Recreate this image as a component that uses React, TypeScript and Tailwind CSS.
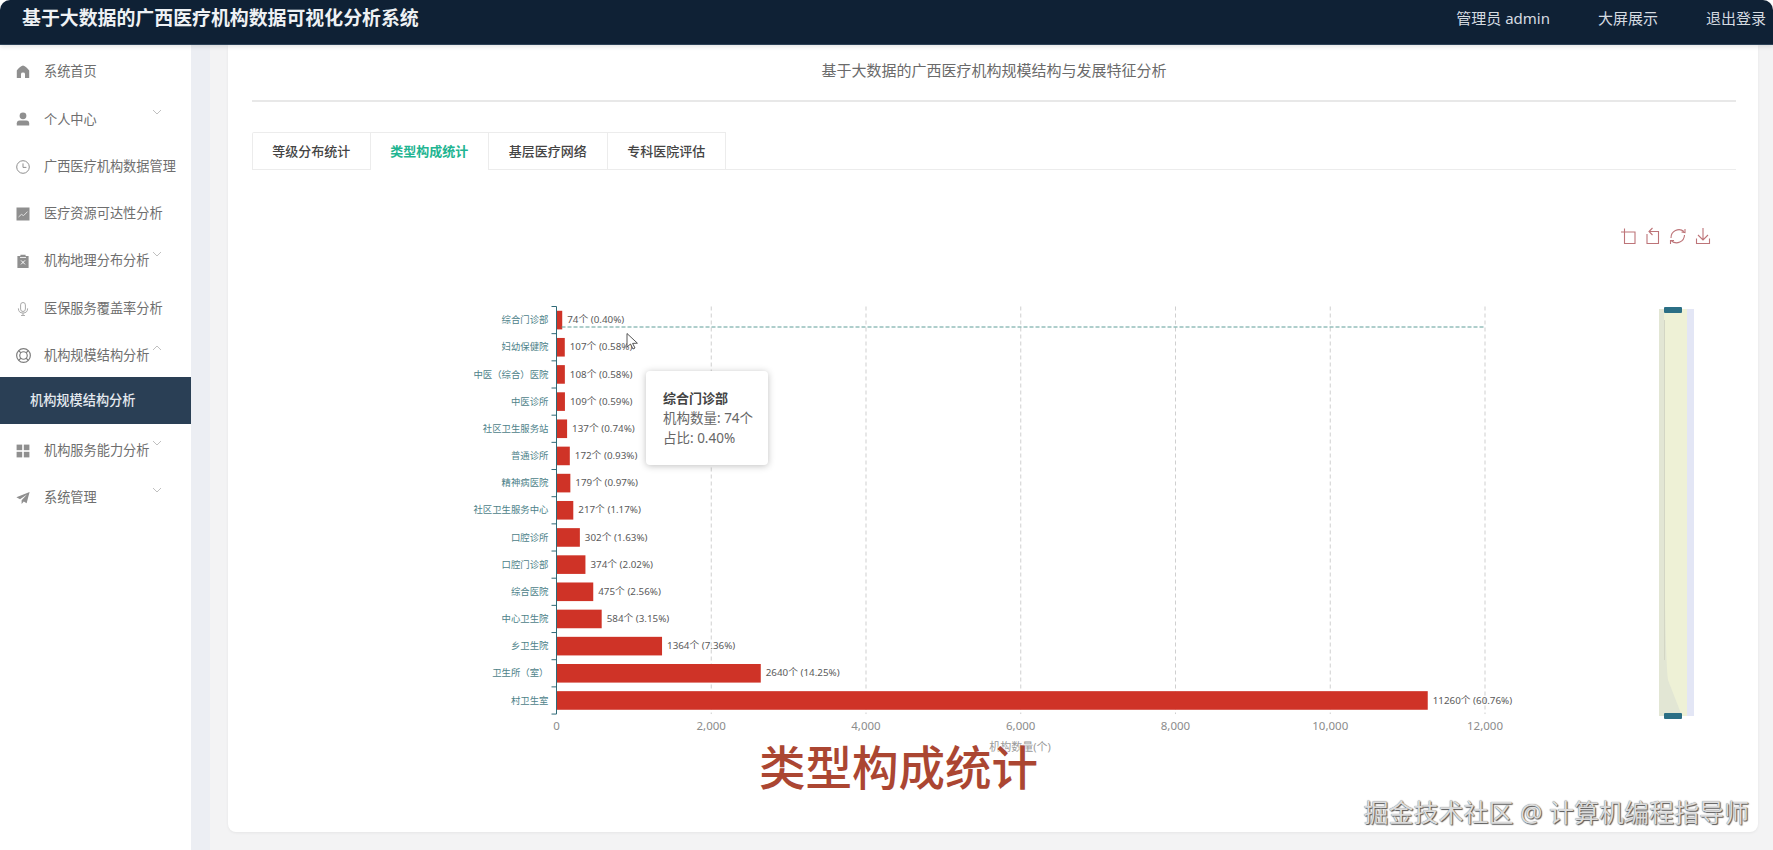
import React from "react";

const FONT = "[font-family:'Noto_Sans','Noto_Sans_CJK_SC',sans-serif]";
const SVG_FONT = "'Noto Sans','Noto Sans CJK SC',sans-serif";

const Home = () => (
  <svg viewBox="0 0 14 14" className="w-[14px] h-[14px]" fill="#8f8f8f">
    <path d="M7 0.5 C4.6 1.4 2.2 3.2 0.8 5.6 L0.8 13 L5 13 L5 9 Q5 7.6 7 7.6 Q9 7.6 9 9 L9 13 L13.2 13 L13.2 5.6 C11.8 3.2 9.4 1.4 7 0.5Z" />
  </svg>
);
const User = () => (
  <svg viewBox="0 0 14 14" className="w-[14px] h-[14px]" fill="#8f8f8f">
    <circle cx="7" cy="3.8" r="3.4" />
    <path d="M0.8 13.5 L0.8 11.2 Q0.8 8.6 3.6 8.4 L10.4 8.4 Q13.2 8.6 13.2 11.2 L13.2 13.5Z" />
  </svg>
);
const Clock = () => (
  <svg viewBox="0 0 14 14" className="w-[14px] h-[14px]" fill="none" stroke="#8f8f8f" strokeWidth="1">
    <circle cx="7" cy="7" r="6.3" />
    <path d="M7 3.4 L7 7.4 L10.4 7.4" />
  </svg>
);
const Chart = () => (
  <svg viewBox="0 0 14 14" className="w-[14px] h-[14px]">
    <rect x="0.5" y="0.5" width="13" height="13" fill="#8f8f8f" />
    <path d="M2.5 10 L5.4 7.4 L7.6 8.6 L11.5 4.6" fill="none" stroke="#e0e0e0" strokeWidth="1" />
  </svg>
);
const Clipboard = () => (
  <svg viewBox="0 0 14 14" className="w-[14px] h-[14px]">
    <path d="M1.4 2 H4.4 V0.7 H9.6 V2 H12.6 V14 H1.4Z" fill="#8f8f8f" />
    <path d="M5 6.4 L9 10.4 M9 6.4 L5 10.4" stroke="#fff" strokeWidth="1" />
    <rect x="4" y="3" width="6" height="0.8" fill="#fff" />
  </svg>
);
const Mic = () => (
  <svg viewBox="0 0 14 14" className="w-[14px] h-[14px]" fill="none" stroke="#a8a8a8" strokeWidth="1">
    <rect x="4.6" y="0.5" width="4.8" height="9" rx="2.4" />
    <path d="M2.4 6.4 Q2.4 11 7 11 Q11.6 11 11.6 6.4 M7 11 V13.6 M5 13.6 H9" />
  </svg>
);
const Help = () => (
  <svg viewBox="0 0 14 14" className="w-[15px] h-[15px]" fill="none" stroke="#7d7d7d" strokeWidth="1.1">
    <circle cx="7" cy="7" r="6.4" />
    <circle cx="7" cy="7" r="3.5" />
    <path d="M2.6 2.6 L4.6 4.6 M11.4 2.6 L9.4 4.6 M2.6 11.4 L4.6 9.4 M11.4 11.4 L9.4 9.4" />
  </svg>
);
const Grid = () => (
  <svg viewBox="0 0 14 14" className="w-[14px] h-[14px]" fill="#8f8f8f">
    <rect x="0.6" y="0.6" width="5.6" height="5.6" />
    <rect x="7.8" y="0.6" width="5.6" height="5.6" />
    <rect x="0.6" y="7.8" width="5.6" height="5.6" />
    <rect x="7.8" y="7.8" width="5.6" height="5.6" />
  </svg>
);
const Plane = () => (
  <svg viewBox="0 0 14 14" className="w-[14px] h-[14px]" fill="#8f8f8f">
    <path d="M13.6 1 L0.4 6.2 L4 8.2 L11 3.4 L5.6 9.2 L5.6 13 L7.8 10.6 L10.6 12.2Z" />
  </svg>
);

const Chevron = ({ up }: { up?: boolean }) => (
  <svg viewBox="0 0 10 6" className="absolute left-[152px] w-[10px] h-[6px] top-[13px]" fill="none" stroke="#b0b0b0" strokeWidth="0.8">
    <path d={up ? "M1 5 L5 1 L9 5" : "M1 1 L5 5 L9 1"} />
  </svg>
);

const menu: { label: string; icon: React.ReactNode; arrow?: "down" | "up" }[] = [
  { label: "系统首页", icon: <Home /> },
  { label: "个人中心", icon: <User />, arrow: "down" },
  { label: "广西医疗机构数据管理", icon: <Clock /> },
  { label: "医疗资源可达性分析", icon: <Chart /> },
  { label: "机构地理分布分析", icon: <Clipboard />, arrow: "down" },
  { label: "医保服务覆盖率分析", icon: <Mic /> },
  { label: "机构规模结构分析", icon: <Help />, arrow: "up" },
];
const menu2: typeof menu = [
  { label: "机构服务能力分析", icon: <Grid />, arrow: "down" },
  { label: "系统管理", icon: <Plane />, arrow: "down" },
];

const MenuItem = ({ label, icon, arrow }: (typeof menu)[number]) => (
  <div className="relative h-[47.3px] flex items-center pl-[16px] text-[13.2px] text-[#6e6e6e]">
    <span className="w-[28px] flex items-center shrink-0">{icon}</span>
    <span className="whitespace-nowrap">{label}</span>
    {arrow && <Chevron up={arrow === "up"} />}
  </div>
);

const rows: [string, number, string][] = [
  ["综合门诊部", 74, "0.40"],
  ["妇幼保健院", 107, "0.58"],
  ["中医（综合）医院", 108, "0.58"],
  ["中医诊所", 109, "0.59"],
  ["社区卫生服务站", 137, "0.74"],
  ["普通诊所", 172, "0.93"],
  ["精神病医院", 179, "0.97"],
  ["社区卫生服务中心", 217, "1.17"],
  ["口腔诊所", 302, "1.63"],
  ["口腔门诊部", 374, "2.02"],
  ["综合医院", 475, "2.56"],
  ["中心卫生院", 584, "3.15"],
  ["乡卫生院", 1364, "7.36"],
  ["卫生所（室）", 2640, "14.25"],
  ["村卫生室", 11260, "60.76"],
];

const X0 = 556.5;
const PX = 154.75 / 2000;
const TOP = 306.5;
const STEP = 27.17;

const BarChart = () => (
  <svg viewBox="252 170 1484 595" className="block w-[1484px] h-[595px]" style={{ fontFamily: SVG_FONT }}>
    {[2000, 4000, 6000, 8000, 10000, 12000].map((v) => (
      <line key={v} x1={X0 + v * PX} x2={X0 + v * PX} y1={TOP} y2={TOP + STEP * 15} stroke="#cfcfcf" strokeDasharray="4 3" />
    ))}
    {rows.map(([name, v, pct], i) => {
      const cy = TOP + STEP * (i + 0.5);
      const w = v * PX;
      return (
        <g key={name}>
          <rect x={X0} y={cy - 9.3} width={w} height={18.6} fill="#cf3327" />
          <text x={548.5} y={cy + 3.2} textAnchor="end" fontSize="9.4" fill="#4d8289">{name}</text>
          <text x={X0 + w + 5} y={cy + 3.2} fontSize="9.8" fill="#5a5a5a">{`${v}个 (${pct}%)`}</text>
        </g>
      );
    })}
    <line x1={X0} x2={X0} y1={TOP} y2={TOP + STEP * 15} stroke="#2f6a78" />
    {Array.from({ length: 16 }).map((_, i) => (
      <line key={i} x1={X0 - 5} x2={X0} y1={TOP + STEP * i} y2={TOP + STEP * i} stroke="#2f6a78" />
    ))}
    <line x1={X0 + 5} x2={1485} y1={327} y2={327} stroke="#5f9d98" strokeDasharray="4 2" />
    {[0, 2000, 4000, 6000, 8000, 10000, 12000].map((v) => (
      <text key={v} x={X0 + v * PX} y={730} textAnchor="middle" fontSize="11.5" fill="#8c8c8c">{v.toLocaleString("en-US")}</text>
    ))}
    <text x={1020} y={751} textAnchor="middle" fontSize="11" fill="#9a9a9a">机构数量(个)</text>

    <g fill="none" stroke="#bd7478" strokeWidth="1.1">
      <path d="M1621 232 H1635 V243.5 H1624.5 V228.5" />
      <path d="M1652.5 228 L1649 231.5 L1652.5 235 M1649 231.5 H1658.5 V243.5 H1647 V234" />
      <path d="M1671 238 A8 8 0 0 1 1684 231.5 M1684.5 235 A8 8 0 0 1 1671.5 241 M1681.5 232 L1685 232.5 L1685 229 M1674 240.5 L1670.5 240.5 L1670.5 244" />
      <path d="M1703 228 V240 M1698 235 L1703 240 L1708 235 M1696.5 238.5 V243.5 H1709.5 V238.5" />
    </g>

    <rect x={1659} y={309} width={35} height={407} fill="#e3e6f5" />
    <rect x={1659} y={309} width={28} height={407} fill="#eef1d6" />
    <path d="M1659 309 H1664 C1664 500 1664 640 1668 680 L1682 716 H1659 Z" fill="#e2e6d4" />
    <line x1={1664.5} x2={1664.5} y1={320} y2={660} stroke="#d3d6c4" />
    <rect x={1664} y={307} width={18} height={6} rx={1} fill="#2b6f85" />
    <rect x={1664} y={713} width={18} height={6} rx={1} fill="#2b6f85" />

    <path d="M627 333.5 L627 347 L630.5 344 L633 349 L635 348 L632.6 343.4 L637.4 343.2 Z" fill="#fff" stroke="#444" strokeWidth="0.9" />
  </svg>
);

export default function App() {
  return (
    <div className={`h-[850px] w-full overflow-hidden bg-white flex flex-col ${FONT}`}>
      <header className="h-[45px] shrink-0 bg-[#0f2135] rounded-t-[10px] flex items-center justify-between pl-[22px] pr-[7px] pb-[8px] border-b border-[#2d4257] relative z-10 shadow-[0_2px_4px_rgba(0,0,0,0.1)]">
        <div className="text-[18.9px] font-bold text-[#eef1f4] whitespace-nowrap">基于大数据的广西医疗机构数据可视化分析系统</div>
        <div className="flex items-center gap-[48px] text-[15px] text-[#d5dbe1] whitespace-nowrap">
          <span>管理员 admin</span>
          <span>大屏展示</span>
          <span>退出登录</span>
        </div>
      </header>
      <div className="flex-1 flex min-h-0">
        <aside className="w-[191px] shrink-0 bg-white pt-[3.5px]">
          {menu.map((m) => (
            <MenuItem key={m.label} {...m} />
          ))}
          <div className="h-[47px] -mt-[2.5px] mb-[3px] bg-[#2a3f55] flex items-center pl-[30px] text-[13.2px] font-medium text-[#e4e9ee] relative">机构规模结构分析</div>
          {menu2.map((m) => (
            <MenuItem key={m.label} {...m} />
          ))}
        </aside>
        <div className="w-[19px] shrink-0 bg-[#eceef3]" />
        <main className="flex-1 min-w-0 bg-[#f3f3f4] pl-[18px] pr-[15px] pb-[18px]">
          <div className="relative h-full bg-white rounded-b-[8px] shadow-[0_1px_3px_rgba(0,0,0,0.06)] pl-[24px] pr-[22px]">
            <div className="h-[57px] border-b-2 border-[#e8e8e8] flex items-center justify-center text-[15px] text-[#6a6a6a] pb-[5px]">
              基于大数据的广西医疗机构规模结构与发展特征分析
            </div>
            <div className="mt-[30px] flex h-[38px] border-b border-[#ececec]">
              {["等级分布统计", "类型构成统计", "基层医疗网络", "专科医院评估"].map((t, i) => (
                <div
                  key={t}
                  className={
                    i === 1
                      ? "w-[118.5px] flex items-center justify-center text-[13px] font-semibold bg-white text-[#1fb592] border-t border-r border-[#ececec] h-[38px] pt-[1px]"
                      : "w-[118.5px] flex items-center justify-center text-[13px] font-medium text-[#444] border-t border-r border-[#ececec] first:border-l first:rounded-tl-[2px] pt-[1px]"
                  }
                >
                  {t}
                </div>
              ))}
            </div>
            <BarChart />

            <div className="absolute left-[418px] top-[326px] w-[122px] h-[94px] bg-white rounded-[4px] shadow-[0_1px_7px_rgba(0,0,0,0.25)] pl-[17px] pt-[17px] text-[13.5px] leading-[20px] text-[#666]">
              <div className="font-bold text-[13px] text-[#444]">综合门诊部</div>
              <div>机构数量: 74个</div>
              <div>占比: 0.40%</div>
            </div>

            <div className="absolute left-[531px] top-[692px] text-[46.5px] leading-[60px] font-medium text-[#ab4632] whitespace-nowrap [text-shadow:0_0_3px_#fff,0_0_3px_#fff]">
              类型构成统计
            </div>
            <div className="absolute right-[9px] top-[747px] text-[25px] leading-[40px] text-[#dcdcdc] whitespace-nowrap [text-shadow:1px_1px_1px_#555,0_0_1px_#666]">
              掘金技术社区 @ 计算机编程指导师
            </div>
          </div>
        </main>
      </div>
    </div>
  );
}
